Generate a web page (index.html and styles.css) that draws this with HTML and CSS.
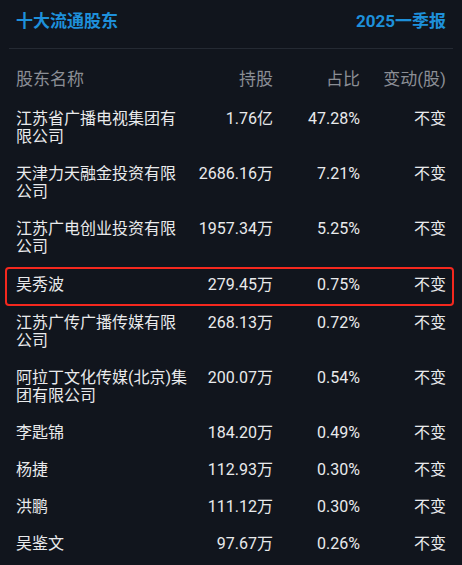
FILE: index.html
```html
<!DOCTYPE html>
<html lang="zh-CN">
<head>
<meta charset="utf-8">
<link rel="stylesheet" href="styles.css">
</head>
<body>
<div class="card">
  <div class="top">
    <span class="title">十大流通股东</span>
    <span class="period">2025一季报</span>
  </div>
  <div class="table">
    <div class="row head">
      <div class="name">股东名称</div>
      <div class="num">持股</div>
      <div class="num">占比</div>
      <div class="num">变动(股)</div>
    </div>
    <div class="row">
      <div class="name">江苏省广播电视集团有限公司</div>
      <div class="num">1.76亿</div>
      <div class="num">47.28%</div>
      <div class="num">不变</div>
    </div>
    <div class="row">
      <div class="name">天津力天融金投资有限公司</div>
      <div class="num">2686.16万</div>
      <div class="num">7.21%</div>
      <div class="num">不变</div>
    </div>
    <div class="row">
      <div class="name">江苏广电创业投资有限公司</div>
      <div class="num">1957.34万</div>
      <div class="num">5.25%</div>
      <div class="num">不变</div>
    </div>
    <div class="row marked">
      <div class="name">吴秀波</div>
      <div class="num">279.45万</div>
      <div class="num">0.75%</div>
      <div class="num">不变</div>
    </div>
    <div class="row">
      <div class="name">江苏广传广播传媒有限公司</div>
      <div class="num">268.13万</div>
      <div class="num">0.72%</div>
      <div class="num">不变</div>
    </div>
    <div class="row">
      <div class="name">阿拉丁文化传媒(北京)集团有限公司</div>
      <div class="num">200.07万</div>
      <div class="num">0.54%</div>
      <div class="num">不变</div>
    </div>
    <div class="row">
      <div class="name">李匙锦</div>
      <div class="num">184.20万</div>
      <div class="num">0.49%</div>
      <div class="num">不变</div>
    </div>
    <div class="row">
      <div class="name">杨捷</div>
      <div class="num">112.93万</div>
      <div class="num">0.30%</div>
      <div class="num">不变</div>
    </div>
    <div class="row">
      <div class="name">洪鹏</div>
      <div class="num">111.12万</div>
      <div class="num">0.30%</div>
      <div class="num">不变</div>
    </div>
    <div class="row">
      <div class="name">吴鉴文</div>
      <div class="num">97.67万</div>
      <div class="num">0.26%</div>
      <div class="num">不变</div>
    </div>
  </div>
</div>
</body>
</html>
```
FILE: styles.css
```css
html, body {
  margin: 0;
  padding: 0;
  background: #11151d;
}
body {
  font-family: Roboto, "Noto Sans CJK SC", sans-serif;
  color: #e9eaec;
  width: 462px;
  height: 565px;
  overflow: hidden;
}
.card {
  padding: 0 9px;
}
.top {
  display: flex;
  justify-content: space-between;
  align-items: center;
  padding: 9px 7px 15px;
  border-bottom: 1px solid #252a33;
  font-size: 17px;
  line-height: 24px;
  font-weight: 700;
  color: #1e90da;
}
.table {
  padding: 0 7px;
}
.row {
  position: relative;
  display: grid;
  grid-template-columns: 174px 83px 87px 1fr;
  align-items: start;
  padding: 10px 0 9px;
  font-size: 16px;
  line-height: 18px;
}
.row.head {
  padding: 21px 0 12px;
  font-size: 17px;
  color: #8b8e95;
}
.num {
  text-align: right;
  white-space: nowrap;
}
.row.marked {
  padding: 11px 0 10px;
}
.row.marked::after {
  content: "";
  position: absolute;
  top: 2px;
  bottom: -2px;
  left: -11px;
  right: -8px;
  border: 2px solid #f5281e;
  border-radius: 4px;
}
```
